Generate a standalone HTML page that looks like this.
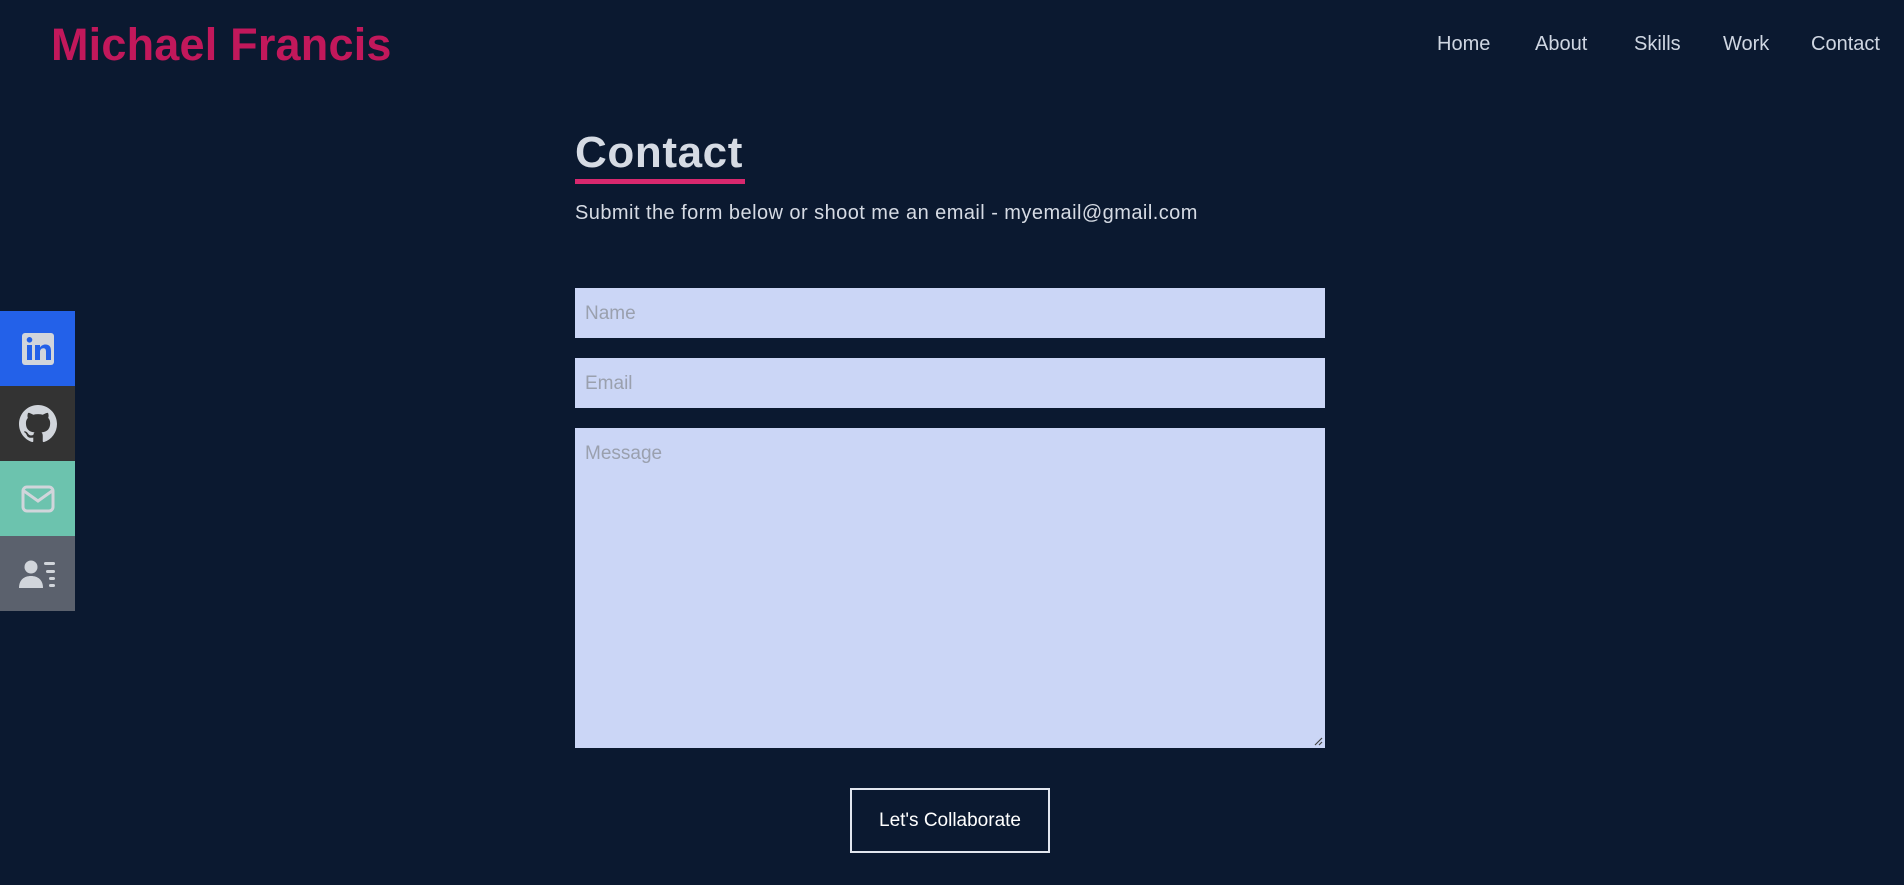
<!DOCTYPE html>
<html><head><meta charset="utf-8"><style>
*{box-sizing:border-box;margin:0;padding:0}
body{width:1904px;height:885px;background:#0b1930;font-family:"Liberation Sans",sans-serif;color:#d6dbe4;position:relative;overflow:hidden}
.logo{position:absolute;left:51px;top:19px;font-size:45px;font-weight:bold;color:#c2185b;letter-spacing:0.2px;white-space:nowrap}
.nav a{position:absolute;top:33px;font-size:20px;color:#cfd6e2;text-decoration:none}
.side{position:absolute;left:0;width:75px;height:75px;display:flex;align-items:center;justify-content:center}
h1{position:absolute;left:575px;top:128px;font-size:44px;font-weight:bold;color:#d6dbe4;letter-spacing:0.6px}
.ul{position:absolute;left:575px;top:179px;width:170px;height:5px;background:#d8286e}
.sub{position:absolute;left:575px;top:202px;font-size:20px;color:#d6dbe4;white-space:nowrap;letter-spacing:0.45px}
.in{position:absolute;left:575px;width:750px;background:#cbd6f6;color:#9aa0ae;font-size:19px;padding-left:10px}
.btn{position:absolute;left:850px;top:788px;width:200px;height:65px;border:2px solid #e2e6ee;display:flex;align-items:center;justify-content:center;font-size:19px;color:#fff}
</style></head><body>
<div class="logo">Michael Francis</div>
<div class="nav"><a style="left:1437px">Home</a><a style="left:1535px">About</a><a style="left:1634px">Skills</a><a style="left:1723px">Work</a><a style="left:1811px">Contact</a></div>

<div class="side" style="top:311px;background:#2361e9"><svg width="34" height="34" viewBox="0 0 34 34"><rect x="1" y="1" width="32" height="32" rx="3" fill="#d1d5db"/><rect x="6" y="13" width="5" height="15" fill="#2361e9"/><circle cx="8.5" cy="7.8" r="2.8" fill="#2361e9"/><path d="M14 13h5v2.5c1-1.8 3-3 5.5-3 4 0 5.5 2.5 5.5 6.5V28h-5v-8.5c0-2-.7-3.3-2.6-3.3-2 0-3.4 1.4-3.4 3.5V28h-5z" fill="#2361e9"/></svg></div>
<div class="side" style="top:386px;background:#333333"><svg width="38" height="38" viewBox="0 0 16 16"><path fill="#d1d5db" d="M8 0C3.580 0 0 3.580 0 8c0 3.540 2.290 6.530 5.470 7.590.4.07.55-.17.55-.38 0-.19-.01-.82-.01-1.490-2.010.37-2.530-.49-2.690-.94-.09-.23-.48-.94-.82-1.130-.28-.15-.68-.52-.01-.53.63-.01 1.080.58 1.230.82.72 1.210 1.870.87 2.330.66.07-.52.28-.87.51-1.070-1.780-.2-3.640-.89-3.640-3.950 0-.87.31-1.590.82-2.150-.08-.2-.36-1.020.08-2.120 0 0 .67-.21 2.200.82.64-.18 1.320-.27 2-.27.68 0 1.360.09 2 .27 1.530-1.040 2.200-.82 2.200-.82.44 1.100.16 1.920.08 2.120.51.56.82 1.270.82 2.150 0 3.070-1.870 3.750-3.650 3.950.29.25.54.73.54 1.480 0 1.070-.01 1.930-.01 2.200 0 .21.15.46.55.38A8.013 8.013 0 0016 8c0-4.420-3.580-8-8-8z"/></svg></div>
<div class="side" style="top:461px;background:#6cc3ae"><svg width="34" height="28" viewBox="0 0 34 28"><rect x="2" y="2" width="30" height="24" rx="4" fill="none" stroke="#d1d5db" stroke-width="3"/><path d="M3 6l14 10 14-10" fill="none" stroke="#d1d5db" stroke-width="3"/></svg></div>
<div class="side" style="top:536px;background:#5b616d"><svg width="40" height="30" viewBox="0 0 40 30"><circle cx="13" cy="8" r="6.5" fill="#d1d5db"/><path d="M1 29c0-8 5-12 12-12s12 4 12 12z" fill="#d1d5db"/><rect x="26" y="3" width="11" height="3" rx="1.5" fill="#d1d5db"/><rect x="28" y="11" width="9" height="3" rx="1.5" fill="#d1d5db"/><rect x="31" y="18" width="6" height="3" rx="1.5" fill="#d1d5db"/><rect x="31" y="25" width="6" height="3" rx="1.5" fill="#d1d5db"/></svg></div>

<h1>Contact</h1>
<div class="ul"></div>
<div class="sub">Submit the form below or shoot me an email - myemail@gmail.com</div>
<div class="in" style="top:288px;height:50px;line-height:52px">Name</div>
<div class="in" style="top:358px;height:50px;line-height:52px">Email</div>
<div class="in" style="top:428px;height:320px;padding-top:15px">Message
<svg style="position:absolute;right:2px;bottom:2px" width="10" height="10"><path d="M9 2L2 9M9 6L6 9" stroke="#444" stroke-width="1.2"/></svg></div>
<div class="btn">Let's Collaborate</div>
</body></html>
